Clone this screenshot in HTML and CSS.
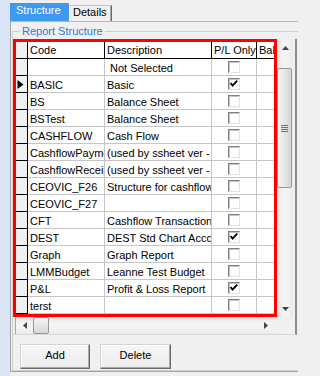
FILE: index.html
```html
<!DOCTYPE html>
<html>
<head>
<meta charset="utf-8">
<link rel="stylesheet" href="styles.css">
</head>
<body>
<div class="app">
  <div class="side"></div>
  <div class="main">
    <div class="tabs">
      <div class="tab tab-active">Structure</div>
      <div class="tab tab-idle">Details</div>
    </div>
    <div class="page">
      <div class="group">
        <div class="caption">Report Structure</div>
        <div class="gridwrap">
          <div class="redbox">
            <div class="row hdr">
              <div class="cell rh"></div>
              <div class="cell">Code</div>
              <div class="cell">Description</div>
              <div class="cell">P/L Only</div>
              <div class="cell">Balance</div>
            </div>
            <div class="row">
              <div class="cell rh"></div>
              <div class="cell"></div>
              <div class="cell ns">Not Selected</div>
              <div class="cell chkcell"><span class="box"></span></div>
              <div class="cell"></div>
            </div>
            <div class="row">
              <div class="cell rh"><svg class="ind" width="11" height="16" viewBox="0 0 11 16"><polygon points="1.5,4 7.5,8.5 1.5,13" fill="#000"/></svg></div>
              <div class="cell">BASIC</div>
              <div class="cell">Basic</div>
              <div class="cell chkcell"><span class="box"><svg width="10" height="10" viewBox="0 0 10 10"><polyline points="1.5,4 3.6,6.6 8.2,1.6" fill="none" stroke="#000" stroke-width="1.8"/></svg></span></div>
              <div class="cell"></div>
            </div>
            <div class="row">
              <div class="cell rh"></div>
              <div class="cell">BS</div>
              <div class="cell">Balance Sheet</div>
              <div class="cell chkcell"><span class="box"></span></div>
              <div class="cell"></div>
            </div>
            <div class="row">
              <div class="cell rh"></div>
              <div class="cell">BSTest</div>
              <div class="cell">Balance Sheet</div>
              <div class="cell chkcell"><span class="box"></span></div>
              <div class="cell"></div>
            </div>
            <div class="row">
              <div class="cell rh"></div>
              <div class="cell">CASHFLOW</div>
              <div class="cell">Cash Flow</div>
              <div class="cell chkcell"><span class="box"></span></div>
              <div class="cell"></div>
            </div>
            <div class="row">
              <div class="cell rh"></div>
              <div class="cell">CashflowPayments</div>
              <div class="cell">(used by ssheet ver - do not delete)</div>
              <div class="cell chkcell"><span class="box"></span></div>
              <div class="cell"></div>
            </div>
            <div class="row">
              <div class="cell rh"></div>
              <div class="cell">CashflowReceipts</div>
              <div class="cell">(used by ssheet ver - do not delete)</div>
              <div class="cell chkcell"><span class="box"></span></div>
              <div class="cell"></div>
            </div>
            <div class="row">
              <div class="cell rh"></div>
              <div class="cell">CEOVIC_F26</div>
              <div class="cell">Structure for cashflow</div>
              <div class="cell chkcell"><span class="box"></span></div>
              <div class="cell"></div>
            </div>
            <div class="row">
              <div class="cell rh"></div>
              <div class="cell">CEOVIC_F27</div>
              <div class="cell"></div>
              <div class="cell chkcell"><span class="box"></span></div>
              <div class="cell"></div>
            </div>
            <div class="row">
              <div class="cell rh"></div>
              <div class="cell">CFT</div>
              <div class="cell">Cashflow Transactional</div>
              <div class="cell chkcell"><span class="box"></span></div>
              <div class="cell"></div>
            </div>
            <div class="row">
              <div class="cell rh"></div>
              <div class="cell">DEST</div>
              <div class="cell">DEST Std Chart Accounts</div>
              <div class="cell chkcell"><span class="box"><svg width="10" height="10" viewBox="0 0 10 10"><polyline points="1.5,4 3.6,6.6 8.2,1.6" fill="none" stroke="#000" stroke-width="1.8"/></svg></span></div>
              <div class="cell"></div>
            </div>
            <div class="row">
              <div class="cell rh"></div>
              <div class="cell">Graph</div>
              <div class="cell">Graph Report</div>
              <div class="cell chkcell"><span class="box"></span></div>
              <div class="cell"></div>
            </div>
            <div class="row">
              <div class="cell rh"></div>
              <div class="cell">LMMBudget</div>
              <div class="cell">Leanne Test Budget</div>
              <div class="cell chkcell"><span class="box"></span></div>
              <div class="cell"></div>
            </div>
            <div class="row">
              <div class="cell rh"></div>
              <div class="cell">P&amp;L</div>
              <div class="cell">Profit &amp; Loss Report</div>
              <div class="cell chkcell"><span class="box"><svg width="10" height="10" viewBox="0 0 10 10"><polyline points="1.5,4 3.6,6.6 8.2,1.6" fill="none" stroke="#000" stroke-width="1.8"/></svg></span></div>
              <div class="cell"></div>
            </div>
            <div class="row">
              <div class="cell rh"></div>
              <div class="cell">terst</div>
              <div class="cell"></div>
              <div class="cell chkcell"><span class="box"></span></div>
              <div class="cell"></div>
            </div>
          </div>
          <div class="vscroll">
            <div class="sbtn"><svg width="7" height="4" viewBox="0 0 7 4"><polygon points="0,4 3.5,0 7,4" fill="#444"/></svg></div>
            <div class="vtrack">
              <div class="vthumb">
                <svg width="7" height="7" viewBox="0 0 7 7"><g stroke-width="1"><line x1="0" y1="0.5" x2="7" y2="0.5" stroke="#707070"/><line x1="0" y1="2.5" x2="7" y2="2.5" stroke="#707070"/><line x1="0" y1="4.5" x2="7" y2="4.5" stroke="#707070"/><line x1="0" y1="6.5" x2="7" y2="6.5" stroke="#707070"/></g></svg>
              </div>
            </div>
            <div class="sbtn"><svg width="7" height="4" viewBox="0 0 7 4"><polygon points="0,0 7,0 3.5,4" fill="#444"/></svg></div>
          </div>
          <div class="hscroll">
            <div class="hbtn hbtn-l"><svg width="4" height="7" viewBox="0 0 4 7"><polygon points="4,0 4,7 0,3.5" fill="#444"/></svg></div>
            <div class="hthumb"></div>
            <div class="hspace"></div>
            <div class="hbtn hbtn-r"><svg width="4" height="7" viewBox="0 0 4 7"><polygon points="0,0 4,3.5 0,7" fill="#444"/></svg></div>
          </div>
          <div class="corner"></div>
        </div>
        <div class="actions">
          <button class="btn btn-add">Add</button>
          <button class="btn btn-del">Delete</button>
        </div>
      </div>
    </div>
  </div>
</div>
</body>
</html>
```

FILE: styles.css
```css
* { box-sizing: border-box; }
html, body { margin: 0; padding: 0; }
body {
  width: 298px;
  height: 376px;
  overflow: hidden;
  background: #f0f0f0;
  font-family: "Liberation Sans", Arial, sans-serif;
  font-size: 11px;
  color: #000;
}
.app { display: flex; width: 320px; height: 376px; }
.side { width: 10px; flex: none; background: #d9e5f4; }
.main { flex: none; width: 300px; display: flex; flex-direction: column; }

.tabs { height: 21px; flex: none; display: flex; align-items: flex-end; }
.tab { flex: none; white-space: nowrap; }
.tab-active {
  width: 59px;
  height: 18px;
  background: #3d9aee;
  color: #fff;
  padding-left: 6px;
  line-height: 14px;
}
.tab-idle {
  width: 43px;
  height: 16px;
  background: #f0f0f0;
  border-top: 1px solid #c4c4c4;
  border-left: 1px solid #ffffff;
  border-right: 1px solid #6a6a6a;
  box-shadow: inset -1px 0 0 #a8a8a8;
  padding-left: 3px;
  line-height: 13px;
}

.page {
  flex: none;
  height: 351px;
  border-top: 1px solid #b8b8b8;
  border-left: 1px solid #a4a4a4;
  border-bottom: 1px solid #a4a4a4;
  padding: 9px 0 0 1px;
}
.group {
  width: 310px;
  height: 340px;
  border: 1px solid #d0d0d0;
}
.caption {
  margin: -7px 0 0 7px;
  padding: 0 2px;
  width: max-content;
  background: #f0f0f0;
  color: #2b7bd6;
  line-height: 13px;
}

.gridwrap {
  margin-top: 1px;
  width: 284px;
  display: grid;
  grid-template-columns: 264px 16px;
  grid-template-rows: 278px 17px;
  padding-right: 2px;
  border-right: 2px solid #8c8c8c;
  border-bottom: 1px solid #d8d8d8;
}
.redbox {
  border: 3px solid #f00;
  background: #fff;
  overflow: hidden;
}
.row {
  display: grid;
  grid-template-columns: 12px 77px 107px 45px 40px;
  height: 17px;
}
.cell {
  border-right: 1px solid #c6c6c6;
  border-bottom: 1px solid #c6c6c6;
  overflow: hidden;
  white-space: nowrap;
  padding: 3px 0 0 2px;
  line-height: 13px;
}
.hdr .cell {
  border-right-color: #000;
  border-bottom-color: #000;
  padding-top: 1px;
  line-height: 14px;
}
.cell.rh {
  background: #f0f0f0;
  border-right-color: #000;
  border-bottom-color: #000;
  padding: 0;
}
.ind { display: block; }
.cell.ns { padding-left: 5px; }
.cell.chkcell {
  padding: 2px 0 0 0;
  display: flex;
  justify-content: center;
  align-items: flex-start;
}
.box {
  width: 12px;
  height: 12px;
  display: block;
  background: #fff;
  border: 1px solid;
  border-color: #808080 #e2e2e2 #e2e2e2 #808080;
  box-shadow: inset 1px 1px 0 #c4c4c4;
}
.box svg { display: block; }

.vscroll {
  display: flex;
  flex-direction: column;
  background: linear-gradient(to right, #e2e2e2, #f3f3f3 35%, #f3f3f3 65%, #e9e9e9);
}
.sbtn {
  height: 17px;
  flex: none;
  display: flex;
  align-items: center;
  justify-content: center;
}
.sbtn svg { display: block; }
.vtrack { flex: 1; padding-top: 12px; }
.vthumb {
  width: 15px;
  height: 120px;
  border: 1px solid #989898;
  border-radius: 2px;
  background: linear-gradient(to right, #f6f6f6, #e6e6e6 50%, #d6d6d6);
  display: flex;
  align-items: center;
  justify-content: center;
}
.vthumb svg { display: block; }

.hscroll {
  margin: 0 3px 0 2px;
  border-left: 1px solid #a8a8a8;
  display: flex;
  background: linear-gradient(#e2e2e2, #f3f3f3 35%, #f3f3f3 65%, #e9e9e9);
}
.hbtn {
  flex: none;
  display: flex;
  align-items: center;
  justify-content: center;
}
.hbtn svg { display: block; }
.hbtn-l { width: 17px; }
.hbtn-r { width: 16px; }
.hthumb {
  width: 16px;
  flex: none;
  border: 1px solid #989898;
  border-radius: 2px;
  background: linear-gradient(#f6f6f6, #e6e6e6 50%, #d6d6d6);
}
.hspace { flex: 1; }
.corner { background: #f0f0f0; }

.actions {
  display: flex;
  gap: 10px;
  padding: 9px 0 0 7px;
}
.btn {
  height: 25px;
  margin: 0;
  padding: 0 0 2px 0;
  font-family: "Liberation Sans", Arial, sans-serif;
  font-size: 11px;
  line-height: 21px;
  color: #000;
  background: linear-gradient(#f6f6f6, #ececec);
  border: 1px solid;
  border-color: #d4d4d4 #6a6a6a #6a6a6a #d4d4d4;
  box-shadow: inset -1px -1px 0 #a8a8a8, inset 1px 1px 0 #ffffff;
  border-radius: 0;
}
.btn-add { width: 70px; }
.btn-del { width: 71px; }
```
